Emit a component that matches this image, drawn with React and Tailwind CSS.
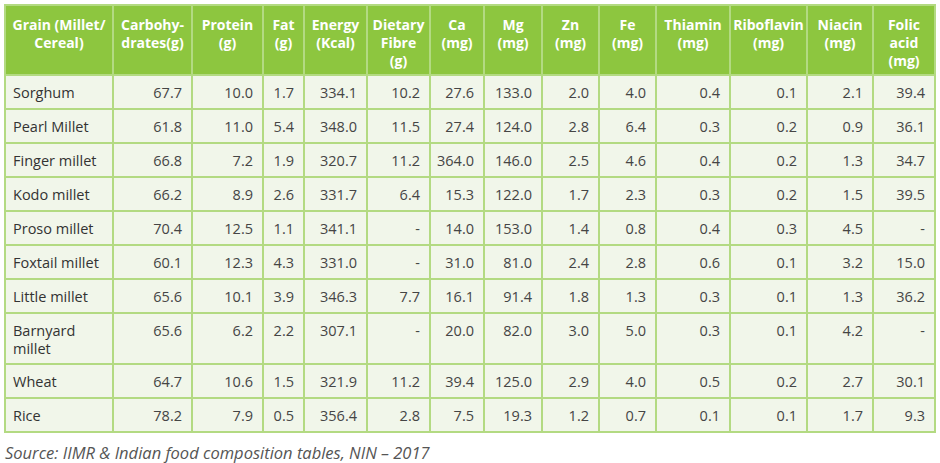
import React from "react";

const HEADERS = [
  ["Grain (Millet/", "Cereal)"],
  ["Carbohy-", "drates(g)"],
  ["Protein", "(g)"],
  ["Fat", "(g)"],
  ["Energy", "(Kcal)"],
  ["Dietary", "Fibre", "(g)"],
  ["Ca", "(mg)"],
  ["Mg", "(mg)"],
  ["Zn", "(mg)"],
  ["Fe", "(mg)"],
  ["Thiamin", "(mg)"],
  ["Riboflavin", "(mg)"],
  ["Niacin", "(mg)"],
  ["Folic", "acid", "(mg)"],
];

// column widths in px, measured off the reference
const WIDTHS = [108, 79, 71, 41, 63, 63, 54, 58, 57, 57, 74, 77, 66, 62];

const ROWS = [
  [["Sorghum"], "67.7", "10.0", "1.7", "334.1", "10.2", "27.6", "133.0", "2.0", "4.0", "0.4", "0.1", "2.1", "39.4"],
  [["Pearl Millet"], "61.8", "11.0", "5.4", "348.0", "11.5", "27.4", "124.0", "2.8", "6.4", "0.3", "0.2", "0.9", "36.1"],
  [["Finger millet"], "66.8", "7.2", "1.9", "320.7", "11.2", "364.0", "146.0", "2.5", "4.6", "0.4", "0.2", "1.3", "34.7"],
  [["Kodo millet"], "66.2", "8.9", "2.6", "331.7", "6.4", "15.3", "122.0", "1.7", "2.3", "0.3", "0.2", "1.5", "39.5"],
  [["Proso millet"], "70.4", "12.5", "1.1", "341.1", "-", "14.0", "153.0", "1.4", "0.8", "0.4", "0.3", "4.5", "-"],
  [["Foxtail millet"], "60.1", "12.3", "4.3", "331.0", "-", "31.0", "81.0", "2.4", "2.8", "0.6", "0.1", "3.2", "15.0"],
  [["Little millet"], "65.6", "10.1", "3.9", "346.3", "7.7", "16.1", "91.4", "1.8", "1.3", "0.3", "0.1", "1.3", "36.2"],
  [["Barnyard", "millet"], "65.6", "6.2", "2.2", "307.1", "-", "20.0", "82.0", "3.0", "5.0", "0.3", "0.1", "4.2", "-"],
  [["Wheat"], "64.7", "10.6", "1.5", "321.9", "11.2", "39.4", "125.0", "2.9", "4.0", "0.5", "0.2", "2.7", "30.1"],
  [["Rice"], "78.2", "7.9", "0.5", "356.4", "2.8", "7.5", "19.3", "1.2", "0.7", "0.1", "0.1", "1.7", "9.3"],
];

export default function App() {
  return (
    <div
      className="w-[940px] h-[463px] bg-white pt-[4px] pl-[4px] overflow-hidden"
      style={{ fontFamily: '"Open Sans", "Noto Sans", sans-serif' }}
    >
      <table className="table-fixed border-collapse w-[930px] text-[14px] leading-[18px]">
        <colgroup>
          {WIDTHS.map((w, i) => (
            <col key={i} style={{ width: w }} />
          ))}
        </colgroup>
        <thead>
          <tr className="bg-[#8dc63f]">
            {HEADERS.map((lines, i) => (
              <th
                key={i}
                className="h-[70px] align-top pt-[10px] px-[2px] text-center font-bold text-white border-2 border-[#b3da82]"
              >
                {lines.map((l, j) => (
                  <div key={j}>{l}</div>
                ))}
              </th>
            ))}
          </tr>
        </thead>
        <tbody className="bg-[#f1f6ea] text-[14.5px]">
          {ROWS.map((row, r) => (
            <tr key={r} className={row[0].length > 1 ? "h-[51px]" : "h-[34px]"}>
              <td className="align-top pt-[8px] pl-[7px] pr-[4px] text-[#333333] border-2 border-[#b3da82]">
                {row[0].map((l, j) => (
                  <div key={j}>{l}</div>
                ))}
              </td>
              {row.slice(1).map((v, c) => (
                <td
                  key={c}
                  className="align-top pt-[8px] pr-[9px] text-right text-[#454545] border-2 border-[#b3da82]"
                >
                  {v}
                </td>
              ))}
            </tr>
          ))}
        </tbody>
      </table>
      <p className="mt-[8px] pl-[1px] italic text-[16.5px] text-[#555555]">
        Source: IIMR &amp; Indian food composition tables, NIN – 2017
      </p>
    </div>
  );
}
